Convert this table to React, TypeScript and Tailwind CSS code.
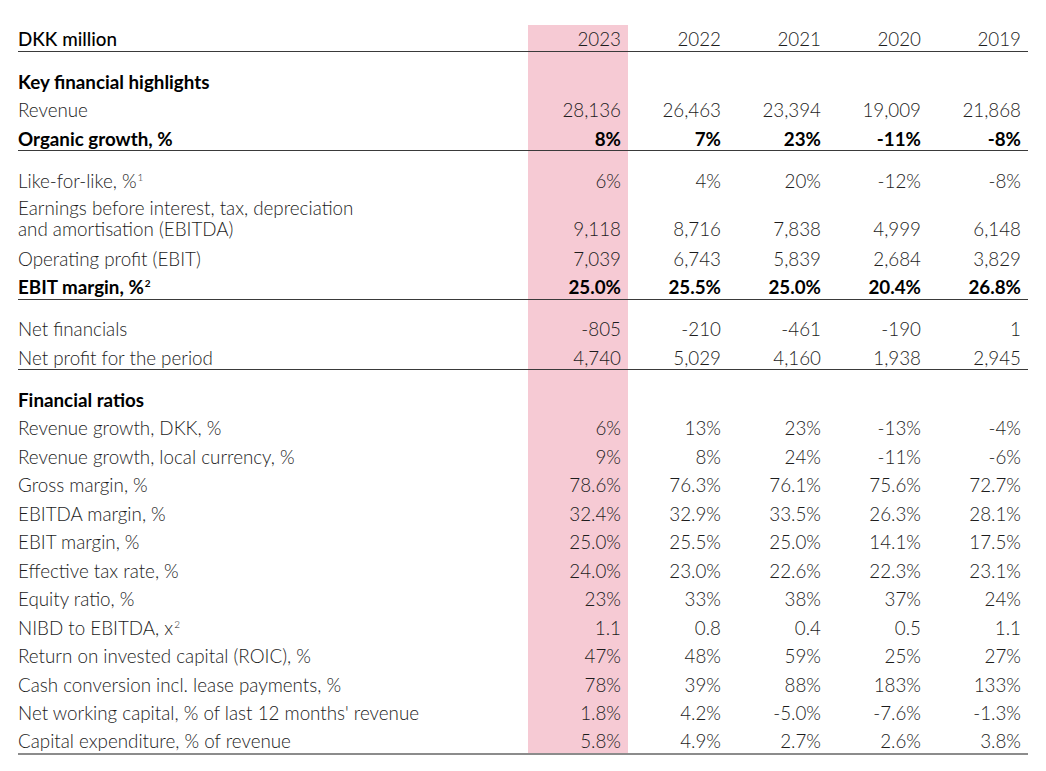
type Row = {
  label: React.ReactNode;
  values?: string[];
  bold?: boolean;
  section?: boolean;
  border?: "dark" | "grey";
  tall?: boolean;
};

const Sup = ({ n }: { n: string }) => (
  <sup className="text-[10px] relative -top-[7px] ml-[1px]">{n}</sup>
);

const rows: (Row | "gap")[] = [
  "gap",
  { label: "Key financial highlights", section: true },
  { label: "Revenue", values: ["28,136", "26,463", "23,394", "19,009", "21,868"] },
  { label: "Organic growth, %", values: ["8%", "7%", "23%", "-11%", "-8%"], bold: true, border: "dark" },
  "gap",
  {
    label: (
      <>
        Like-for-like, %<Sup n="1" />
      </>
    ),
    values: ["6%", "4%", "20%", "-12%", "-8%"],
  },
  {
    label: (
      <>
        Earnings before interest, tax, depreciation
        <br />
        and amortisation (EBITDA)
      </>
    ),
    values: ["9,118", "8,716", "7,838", "4,999", "6,148"],
    tall: true,
  },
  { label: "Operating profit (EBIT)", values: ["7,039", "6,743", "5,839", "2,684", "3,829"] },
  {
    label: (
      <>
        EBIT margin, %<Sup n="2" />
      </>
    ),
    values: ["25.0%", "25.5%", "25.0%", "20.4%", "26.8%"],
    bold: true,
    border: "dark",
  },
  "gap",
  { label: "Net financials", values: ["-805", "-210", "-461", "-190", "1"] },
  { label: "Net profit for the period", values: ["4,740", "5,029", "4,160", "1,938", "2,945"], border: "dark" },
  "gap",
  { label: "Financial ratios", section: true },
  { label: "Revenue growth, DKK, %", values: ["6%", "13%", "23%", "-13%", "-4%"] },
  { label: "Revenue growth, local currency, %", values: ["9%", "8%", "24%", "-11%", "-6%"] },
  { label: "Gross margin, %", values: ["78.6%", "76.3%", "76.1%", "75.6%", "72.7%"] },
  { label: "EBITDA margin, %", values: ["32.4%", "32.9%", "33.5%", "26.3%", "28.1%"] },
  { label: "EBIT margin, %", values: ["25.0%", "25.5%", "25.0%", "14.1%", "17.5%"] },
  { label: "Effective tax rate, %", values: ["24.0%", "23.0%", "22.6%", "22.3%", "23.1%"] },
  { label: "Equity ratio, %", values: ["23%", "33%", "38%", "37%", "24%"] },
  {
    label: (
      <>
        NIBD to EBITDA, x<Sup n="2" />
      </>
    ),
    values: ["1.1", "0.8", "0.4", "0.5", "1.1"],
  },
  { label: "Return on invested capital (ROIC), %", values: ["47%", "48%", "59%", "25%", "27%"] },
  { label: "Cash conversion incl. lease payments, %", values: ["78%", "39%", "88%", "183%", "133%"] },
  { label: "Net working capital, % of last 12 months' revenue", values: ["1.8%", "4.2%", "-5.0%", "-7.6%", "-1.3%"] },
  { label: "Capital expenditure, % of revenue", values: ["5.8%", "4.9%", "2.7%", "2.6%", "3.8%"], border: "grey" },
];

const grid = "grid grid-cols-[510px_100px_100px_100px_100px_100px]";

function TableRow({ row }: { row: Row }) {
  const weight = row.bold || row.section ? "font-bold text-black" : "font-light text-[#1c1c1c]";
  let height = "h-[28.5px]";
  let cell = "items-center";
  if (row.tall) {
    height = "h-[49.5px]";
    cell = "items-end pb-[5px]";
  }
  if (row.border === "dark") {
    height = "h-[27.25px] border-b border-[#3a3a3a]";
    cell = "items-center pt-[2.5px]";
  }
  if (row.border === "grey") {
    height = "h-[28px] border-b-2 border-[#8c8c8c]";
    cell = "items-center pt-[2px]";
  }
  const vals = row.values ?? ["", "", "", "", ""];
  return (
    <div className={`${grid} ${height} ${weight}`}>
      <div className={`flex ${cell}`}>
        <div className={row.tall ? "leading-[21px]" : ""}>{row.label}</div>
      </div>
      {vals.map((v, i) => (
        <div
          key={i}
          className={`flex justify-end pr-[7px] ${cell} ${i === 0 ? "bg-[#f6cad4]" : ""}`}
        >
          {v}
        </div>
      ))}
    </div>
  );
}

export default function App() {
  return (
    <div
      className="min-h-screen bg-white pt-[25px] pl-[18px] text-[18.8px] leading-[21px] tabular-nums"
      style={{ fontFamily: "Lato, 'Noto Sans', sans-serif" }}
    >
      <div className="w-[1010px]">
        <div className={`${grid} h-[27px] border-b border-[#3a3a3a]`}>
          <div className="flex items-center pt-[1px] font-medium text-black">DKK million</div>
          {["2023", "2022", "2021", "2020", "2019"].map((y, i) => (
            <div
              key={y}
              className={`flex items-center justify-end pt-[1px] pr-[7px] font-light text-[#1c1c1c] ${
                i === 0 ? "bg-[#f6cad4]" : ""
              }`}
            >
              {y}
            </div>
          ))}
        </div>
        {rows.map((r, i) =>
          r === "gap" ? (
            <div key={i} className={`${grid} h-[14.75px]`}>
              <div />
              <div className="bg-[#f6cad4]" />
            </div>
          ) : (
            <TableRow key={i} row={r} />
          )
        )}
      </div>
    </div>
  );
}
